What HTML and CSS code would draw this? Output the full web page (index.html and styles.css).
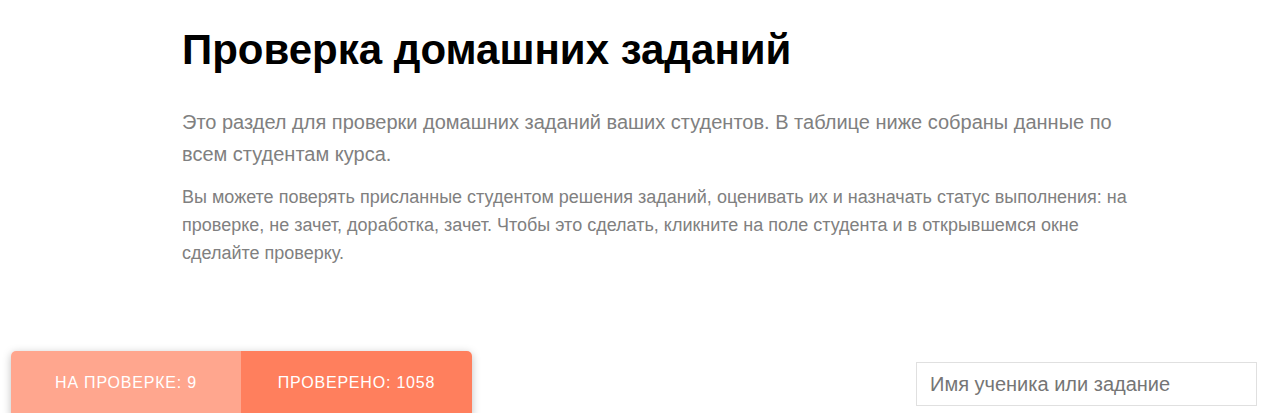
FILE: index.html
```html
<!DOCTYPE html>
<html lang="ru">
<head>
    <meta charset="UTF-8">
    <meta name="viewport" content="width=device-width, initial-scale=1.0">
    <title>Проверка домашних заданий</title>
    <link rel="stylesheet" href="styles.css">
</head>
<body>
    <div class="intro">
        <h1>Проверка домашних заданий</h1>
        <p class="lead">Это раздел для проверки домашних заданий ваших студентов. В таблице ниже собраны данные по всем студентам курса.</p>
        <p class="note">Вы можете поверять присланные студентом решения заданий, оценивать их и назначать статус выполнения: на проверке, не зачет, доработка, зачет. Чтобы это сделать, кликните на поле студента и в открывшемся окне сделайте проверку.</p>
    </div>

    <div class="toolbar">
        <div class="tabs">
            <button class="tab tab-pending">На проверке: 9</button>
            <button class="tab tab-done">Проверено: 1058</button>
        </div>
        <input type="text" class="search" placeholder="Имя ученика или задание">
    </div>
</body>
</html>
```

FILE: styles.css
```css
body {
    font-family: 'Liberation Sans', Arial, sans-serif;
    margin: 0;
    background-color: #fff;
    overflow: hidden;
}
.intro {
    width: 976px;
    margin-left: 182px;
    padding-top: 26px;
}
h1 {
    font-size: 42px;
    font-weight: bold;
    color: #000;
    margin: 0 0 32px;
    line-height: 48px;
}
.lead {
    font-size: 20px;
    line-height: 32px;
    color: #808080;
    margin: 0 0 13px;
}
.note {
    font-size: 18px;
    line-height: 28px;
    color: #808080;
    margin: 0;
}
.toolbar {
    display: flex;
    justify-content: space-between;
    align-items: flex-start;
    margin-top: 84px;
    padding: 0 23px 0 11px;
}
.tabs {
    display: flex;
    border-radius: 5px 5px 0 0;
    overflow: hidden;
    box-shadow: 0 2px 8px rgba(0, 0, 0, 0.25);
}
.tab {
    width: 230px;
    height: 66px;
    border: none;
    color: #fff;
    font-family: inherit;
    font-size: 16px;
    letter-spacing: 0.8px;
    text-transform: uppercase;
    padding: 0 0 2px;
    cursor: pointer;
}
.tab-pending {
    background-color: #ffa68e;
}
.tab-done {
    width: 231px;
    background-color: #ff7f5d;
}
.search {
    width: 341px;
    height: 44px;
    box-sizing: border-box;
    margin-top: 11px;
    padding: 0 13px;
    border: 1px solid #e0e0e0;
    font-family: inherit;
    font-size: 20px;
    color: #333;
    outline: none;
}
.search::placeholder {
    color: #757575;
}
```
